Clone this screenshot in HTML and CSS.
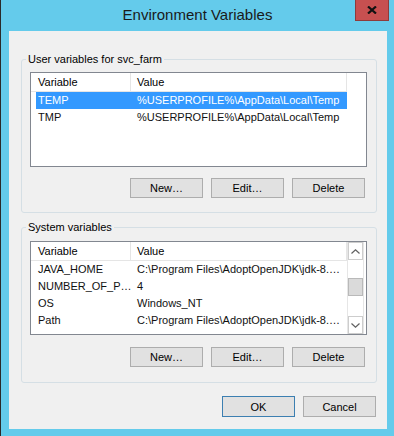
FILE: index.html
```html
<!DOCTYPE html>
<html lang="en">
<head>
    <meta charset="UTF-8">
    <meta name="viewport" content="width=device-width, initial-scale=1.0">
    <title>Environment Variables</title>
    <link rel="stylesheet" href="styles.css">
</head>
<body>
    <div class="window">
        <div class="titlebar">
            <span></span>
            <div class="title">Environment Variables</div>
            <button class="close" title="Close">
                <svg width="10" height="8" viewBox="0 0 10 8">
                    <path d="M1 0.5 L9 7.5 M9 0.5 L1 7.5" stroke="#111" stroke-width="2.2" fill="none"/>
                </svg>
            </button>
        </div>

        <div class="client">
            <fieldset class="group">
                <legend>User variables for svc_farm</legend>
                <div class="list">
                    <div class="list-body">
                        <div class="list-head">
                            <span class="col-name">Variable</span>
                            <span class="col-value">Value</span>
                        </div>
                        <div class="row selected">
                            <span class="col-name">TEMP</span>
                            <span class="col-value">%USERPROFILE%\AppData\Local\Temp</span>
                        </div>
                        <div class="row">
                            <span class="col-name">TMP</span>
                            <span class="col-value">%USERPROFILE%\AppData\Local\Temp</span>
                        </div>
                    </div>
                </div>
                <div class="actions">
                    <button>New…</button>
                    <button>Edit…</button>
                    <button>Delete</button>
                </div>
            </fieldset>

            <fieldset class="group system">
                <legend>System variables</legend>
                <div class="list">
                    <div class="list-body">
                        <div class="list-head">
                            <span class="col-name">Variable</span>
                            <span class="col-value">Value</span>
                        </div>
                        <div class="row">
                            <span class="col-name">JAVA_HOME</span>
                            <span class="col-value">C:\Program Files\AdoptOpenJDK\jdk-8.…</span>
                        </div>
                        <div class="row">
                            <span class="col-name">NUMBER_OF_P…</span>
                            <span class="col-value">4</span>
                        </div>
                        <div class="row">
                            <span class="col-name">OS</span>
                            <span class="col-value">Windows_NT</span>
                        </div>
                        <div class="row">
                            <span class="col-name">Path</span>
                            <span class="col-value">C:\Program Files\AdoptOpenJDK\jdk-8.…</span>
                        </div>
                    </div>
                    <div class="scrollbar">
                        <div class="sb-btn">
                            <svg width="9" height="5" viewBox="0 0 9 5"><path d="M0.5 4.5 L4.5 0.8 L8.5 4.5" stroke="#606060" stroke-width="1.2" fill="none"/></svg>
                        </div>
                        <div class="sb-track small"></div>
                        <div class="sb-thumb"></div>
                        <div class="sb-track"></div>
                        <div class="sb-btn">
                            <svg width="9" height="5" viewBox="0 0 9 5"><path d="M0.5 0.5 L4.5 4.2 L8.5 0.5" stroke="#606060" stroke-width="1.2" fill="none"/></svg>
                        </div>
                    </div>
                </div>
                <div class="actions">
                    <button>New…</button>
                    <button>Edit…</button>
                    <button>Delete</button>
                </div>
            </fieldset>

            <div class="dialog-actions">
                <button class="default">OK</button>
                <button>Cancel</button>
            </div>
        </div>
    </div>
</body>
</html>
```

FILE: styles.css
```css
* {
    box-sizing: border-box;
}
body {
    margin: 0;
    font-family: 'Liberation Sans', Arial, sans-serif;
    font-size: 11px;
    color: #000;
    background: #64cbeb;
}
.window {
    width: 394px;
    height: 436px;
    background: #64cbeb;
    border-left: 1px solid #2a2a2a;
    display: flex;
    flex-direction: column;
}
.titlebar {
    height: 31px;
    display: grid;
    grid-template-columns: 1fr auto 1fr;
}
.title {
    font-size: 15px;
    line-height: 30px;
    color: #1a1a1a;
}
.close {
    justify-self: end;
    align-self: start;
    margin-right: 5px;
    width: 34px;
    height: 21px;
    padding: 0;
    background: #c75050;
    border: 1px solid #8e3b3b;
    border-top: none;
    display: flex;
    align-items: center;
    justify-content: center;
}
.client {
    flex: 1;
    margin: 0 7px 7px 8px;
    background: #f0f0f0;
    padding: 22px 10px 0 12px;
}
.group {
    margin: 0;
    min-width: 0;
    border: 1px solid #d5dfe5;
    border-radius: 3px;
    padding: 6px 9px 14px 8px;
}
.group legend {
    padding: 0 2px;
    margin-left: -4px;
    line-height: 13px;
}
.group.system {
    margin-top: 8px;
    padding-top: 7px;
    padding-bottom: 15px;
}
.list {
    height: 95px;
    border: 1px solid #828790;
    background: #fff;
    display: flex;
}
.system .list {
    height: 94px;
}
.list-body {
    width: 316px;
    flex: none;
}
.list-head {
    display: flex;
    height: 19px;
    border-bottom: 1px solid #e5e5e5;
    line-height: 18px;
}
.list-head .col-name {
    width: 100px;
    padding-left: 7px;
    border-right: 1px solid #e5e5e5;
}
.list-head .col-value {
    flex: 1;
    padding-left: 6px;
    border-right: 1px solid #e5e5e5;
}
.row {
    display: flex;
    height: 17px;
    line-height: 17px;
    margin-left: 5px;
    color: #111;
}
.row span {
    padding-left: 2px;
    white-space: nowrap;
    overflow: hidden;
}
.row .col-name {
    width: 99px;
    flex: none;
}
.row .col-value {
    flex: 1;
}
.row.selected {
    background: #3399ff;
    color: #fff;
}
.scrollbar {
    width: 17px;
    margin-left: auto;
    margin-right: 2px;
    display: flex;
    flex-direction: column;
    border-left: 1px solid #e6e6e6;
    border-right: 1px solid #e6e6e6;
}
.sb-btn {
    height: 18px;
    border: 1px solid #cdcdcd;
    display: flex;
    align-items: center;
    justify-content: center;
}
.sb-track {
    flex: 1;
}
.sb-track.small {
    flex: none;
    height: 18px;
}
.sb-thumb {
    height: 18px;
    background: #dadada;
    border: 1px solid #b9b9b9;
}
.actions {
    display: flex;
    justify-content: flex-end;
    gap: 8px;
    margin-top: 11px;
    margin-right: 2px;
}
.system .actions {
    margin-top: 12px;
}
button {
    font-family: 'Liberation Sans', Arial, sans-serif;
    font-size: 11px;
    color: #000;
}
.actions button,
.dialog-actions button {
    width: 73px;
    height: 20px;
    padding: 0;
    background: #e1e1e1;
    border: 1px solid #adadad;
}
.dialog-actions {
    display: flex;
    justify-content: flex-end;
    gap: 8px;
    margin-top: 13px;
    margin-right: 1px;
}
.dialog-actions button {
    height: 21px;
}
.dialog-actions .default {
    border-color: #3c7fb1;
}
```
